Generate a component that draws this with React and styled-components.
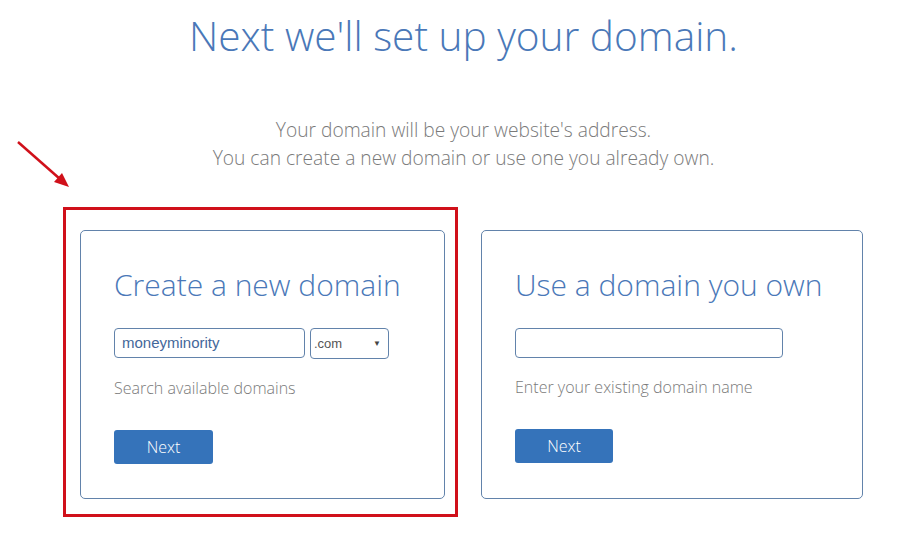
import React from 'react';
import styled, { createGlobalStyle } from 'styled-components';

const COLORS = {
  blue: '#4a78b8',
  text: '#7a7a7a',
  border: '#6283ab',
  button: '#3573ba',
  red: '#d0101a',
};

const GlobalStyle = createGlobalStyle`
  html, body {
    margin: 0;
    padding: 0;
    background: #ffffff;
  }
  body {
    font-family: "Open Sans", "Noto Sans", sans-serif;
    font-weight: 300;
  }
`;

const Page = styled.div`
  position: relative;
  width: 907px;
  height: 537px;
  overflow: hidden;
  background: #fff;
`;

const Header = styled.header`
  padding-left: 20px;
  text-align: center;
`;

const Title = styled.h1`
  margin: 0;
  padding-top: 10px;
  font-size: 40.6px;
  font-weight: 300;
  line-height: 52px;
  color: ${COLORS.blue};
`;

const Intro = styled.p`
  margin: 54px 0 0;
  font-size: 19.2px;
  line-height: 28px;
  font-weight: 300;
  color: ${COLORS.text};
`;

const Cards = styled.div`
  display: grid;
  grid-template-columns: 365px 382px;
  column-gap: 36px;
  margin: 58px 0 0 80px;
`;

const Card = styled.section`
  position: relative;
  box-sizing: border-box;
  height: 269px;
  padding: 34px 33px 0 33px;
  border: 1px solid ${COLORS.border};
  border-radius: 5px;
`;

const Highlight = styled.div`
  position: absolute;
  top: -24px;
  left: -18px;
  right: -14px;
  bottom: -19px;
  border: 3px solid ${COLORS.red};
  pointer-events: none;
`;

const Arrow = styled.svg`
  position: absolute;
  left: 14px;
  top: 138px;
`;

const Heading = styled.h2`
  margin: 0;
  font-size: 30px;
  line-height: 40px;
  font-weight: 300;
  color: ${COLORS.blue};
`;

const Fields = styled.div`
  display: flex;
  gap: 5px;
  margin-top: 23px;
`;

const TextInput = styled.div`
  box-sizing: border-box;
  width: ${p => p.$width}px;
  height: 30px;
  padding: 0 7px;
  border: 1px solid ${COLORS.border};
  border-radius: 4px;
  font-family: "Liberation Sans", Arial, sans-serif;
  font-size: 15px;
  font-weight: 400;
  line-height: 28px;
  color: #44679a;
`;

const Select = styled.div`
  box-sizing: border-box;
  display: flex;
  align-items: center;
  justify-content: space-between;
  width: 79px;
  height: 31px;
  padding: 0 7px 0 3px;
  border: 1px solid ${COLORS.border};
  border-radius: 4px;
  font-family: "Liberation Sans", Arial, sans-serif;
  font-size: 13px;
  font-weight: 400;
  color: #555;
`;

const Caret = styled.span`
  font-size: 8px;
  color: #444;
`;

const Hint = styled.p`
  margin: 18px 0 0;
  font-size: 16px;
  line-height: 22px;
  font-weight: 300;
  color: ${COLORS.text};
`;

const Button = styled.button`
  display: block;
  margin-top: 31px;
  width: ${p => p.$width}px;
  height: 34px;
  padding: 0;
  border: none;
  border-radius: 3px;
  background: ${COLORS.button};
  color: #fff;
  font-family: "Open Sans", "Noto Sans", sans-serif;
  font-size: 16px;
  font-weight: 300;
  cursor: pointer;
`;

export default function App() {
  return (
    <Page>
      <GlobalStyle />
      <Header>
        <Title>Next we'll set up your domain.</Title>
        <Intro>
          Your domain will be your website's address.
          <br />
          You can create a new domain or use one you already own.
        </Intro>
      </Header>
      <Arrow width="60" height="52" viewBox="0 0 60 52">
        <line x1="4" y1="4" x2="46" y2="41" stroke={COLORS.red} strokeWidth="2.5" />
        <polygon points="55,49 40,44 48,35" fill={COLORS.red} />
      </Arrow>
      <Cards>
        <Card>
          <Highlight />
          <Heading>Create a new domain</Heading>
          <Fields>
            <TextInput $width={191}>moneyminority</TextInput>
            <Select>
              .com
              <Caret>▼</Caret>
            </Select>
          </Fields>
          <Hint>Search available domains</Hint>
          <Button $width={99}>Next</Button>
        </Card>
        <Card>
          <Heading>Use a domain you own</Heading>
          <Fields>
            <TextInput $width={268} />
          </Fields>
          <Hint>Enter your existing domain name</Hint>
          <Button $width={98}>Next</Button>
        </Card>
      </Cards>
    </Page>
  );
}
